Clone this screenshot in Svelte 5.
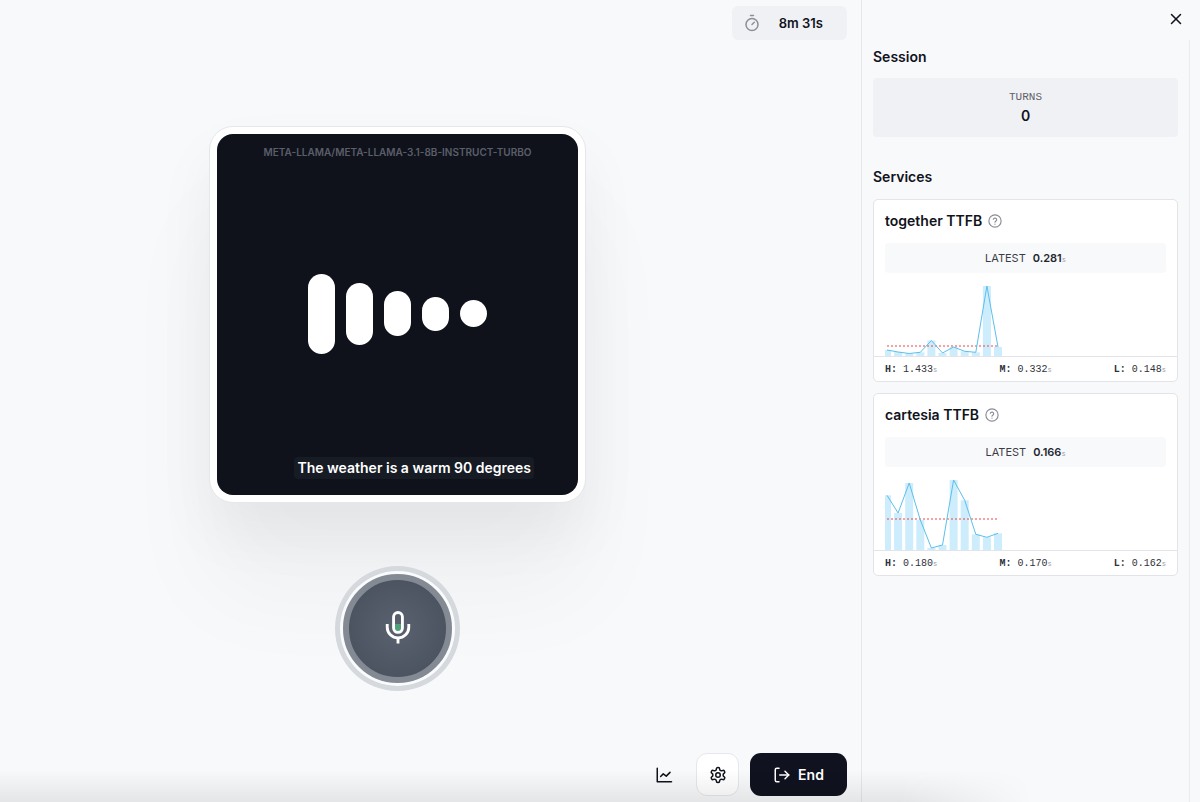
<script lang="ts">
    type Service = {
        name: string;
        latest: string;
        high: string;
        median: string;
        low: string;
        medianLine: number;
        points: number[];
    };

    const CHART_HEIGHT = 71;
    const STEP = 11.1;
    const BAR = 8;

    // points are distances from the top of the chart
    const services: Service[] = [
        {
            name: "together",
            latest: "0.281",
            high: "1.433",
            median: "0.332",
            low: "0.148",
            medianLine: 61,
            points: [65, 67, 68.5, 67.3, 55.5, 68, 62, 66.3, 67.3, 1, 62],
        },
        {
            name: "cartesia",
            latest: "0.166",
            high: "0.180",
            median: "0.170",
            low: "0.162",
            medianLine: 40,
            points: [16.3, 34, 4, 41, 69, 66, 1, 21.3, 55.3, 58.3, 54.3],
        },
    ];

    const bars = [80, 62, 45, 34, 27];

    function xAt(i: number) {
        return 2 + i * STEP;
    }

    function linePath(points: number[]) {
        return points.map((y, i) => `${xAt(i)},${y}`).join(" ");
    }
</script>

<div class="app">
    <main>
        <header>
            <div class="timer">
                <svg width="18" height="18" viewBox="0 0 24 24" fill="none" stroke="currentColor" stroke-width="2" stroke-linecap="round" stroke-linejoin="round">
                    <line x1="10" x2="14" y1="2" y2="2" />
                    <line x1="12" x2="15" y1="14" y2="11" />
                    <circle cx="12" cy="14" r="8" />
                </svg>
                <span>8m 31s</span>
            </div>
        </header>

        <section class="stage">
            <div class="frame">
                <div class="agent">
                    <span class="model">META-LLAMA/META-LLAMA-3.1-8B-INSTRUCT-TURBO</span>
                    <div class="wave">
                        {#each bars as height}
                            <i style="height: {height}px"></i>
                        {/each}
                    </div>
                    <p class="caption"><span>The weather is a warm 90 degrees</span></p>
                </div>
            </div>

            <button class="mic" aria-label="Microphone">
                <svg width="38" height="38" viewBox="0 0 24 24" fill="none" stroke="#fff" stroke-width="2" stroke-linecap="butt" stroke-linejoin="round">
                    <path d="M10 9.5h4v3a2 2 0 0 1-4 0z" fill="#4f9f78" stroke="none" />
                    <rect x="9.2" y="2.2" width="5.6" height="12.6" rx="2.8" stroke-width="1.8" />
                    <path d="M5.2 9.5v2a6.8 6.8 0 0 0 13.6 0v-2" stroke-width="1.8" />
                    <path d="M12 18.5v3.3" stroke-width="1.8" />
                </svg>
            </button>
        </section>

        <footer>
            <button class="icon-btn" aria-label="Stats">
                <svg width="18" height="18" viewBox="0 0 24 24" fill="none" stroke="currentColor" stroke-width="2" stroke-linecap="round" stroke-linejoin="round">
                    <path d="M3 3v18h19" />
                    <path d="m7.500 14 3.500-3.500 4 3 5-5" />
                </svg>
            </button>
            <button class="icon-btn outlined" aria-label="Settings">
                <svg width="18" height="18" viewBox="0 0 24 24" fill="none" stroke="currentColor" stroke-width="2" stroke-linecap="round" stroke-linejoin="round">
                    <path d="M12.22 2h-.44a2 2 0 0 0-2 2v.18a2 2 0 0 1-1 1.73l-.43.25a2 2 0 0 1-2 0l-.15-.08a2 2 0 0 0-2.73.73l-.22.38a2 2 0 0 0 .73 2.73l.15.1a2 2 0 0 1 1 1.72v.51a2 2 0 0 1-1 1.74l-.15.09a2 2 0 0 0-.73 2.73l.22.38a2 2 0 0 0 2.73.73l.15-.08a2 2 0 0 1 2 0l.43.25a2 2 0 0 1 1 1.73V20a2 2 0 0 0 2 2h.44a2 2 0 0 0 2-2v-.18a2 2 0 0 1 1-1.73l.43-.25a2 2 0 0 1 2 0l.15.08a2 2 0 0 0 2.73-.73l.22-.39a2 2 0 0 0-.73-2.73l-.15-.08a2 2 0 0 1-1-1.74v-.5a2 2 0 0 1 1-1.74l.15-.09a2 2 0 0 0 .73-2.73l-.22-.38a2 2 0 0 0-2.73-.73l-.15.08a2 2 0 0 1-2 0l-.43-.25a2 2 0 0 1-1-1.73V4a2 2 0 0 0-2-2z" />
                    <circle cx="12" cy="12" r="3" />
                </svg>
            </button>
            <button class="end">
                <svg width="18" height="18" viewBox="0 0 24 24" fill="none" stroke="currentColor" stroke-width="2" stroke-linecap="round" stroke-linejoin="round">
                    <path d="M8 21H5a2 2 0 0 1-2-2V5a2 2 0 0 1 2-2h3" />
                    <path d="M9 12h12" />
                    <path d="m16 7 5 5-5 5" />
                </svg>
                End
            </button>
        </footer>
    </main>

    <aside>
        <div class="close-row">
            <button class="close" aria-label="Close">
                <svg width="18" height="18" viewBox="0 0 24 24" fill="none" stroke="currentColor" stroke-width="2" stroke-linecap="round">
                    <path d="M18 6 6 18" />
                    <path d="m6 6 12 12" />
                </svg>
            </button>
        </div>
        <div class="panel">
            <h2>Session</h2>
            <div class="turns">
                <span class="label">TURNS</span>
                <span class="count">0</span>
            </div>

            <h2>Services</h2>
            <div class="cards">
                {#each services as service}
                    <article>
                        <div class="card-body">
                            <h3>
                                {service.name} TTFB
                                <svg width="14" height="14" viewBox="0 0 24 24" fill="none" stroke="currentColor" stroke-width="2" stroke-linecap="round" stroke-linejoin="round">
                                    <circle cx="12" cy="12" r="10.5" />
                                    <path d="M9.1 9a3 3 0 0 1 5.8 1c0 2-3 2.6-3 4" />
                                    <path d="M12 17.4h.01" />
                                </svg>
                            </h3>
                            <div class="latest">
                                <span>LATEST</span>
                                <span><strong>{service.latest}</strong><small>s</small></span>
                            </div>
                            <svg class="chart" width="100%" height={CHART_HEIGHT}>
                                {#each service.points as y, i}
                                    <rect x={xAt(i) - BAR / 2} {y} width={BAR} height={CHART_HEIGHT - y} fill="#cdedfc" />
                                {/each}
                                <line x1={xAt(0)} x2={xAt(10)} y1={service.medianLine} y2={service.medianLine} stroke="#ef4444" stroke-dasharray="2 2" />
                                <polyline points={linePath(service.points)} fill="none" stroke="#5bbfec" />
                            </svg>
                        </div>
                        <div class="summary">
                            <span><b>H:</b> {service.high}<small>s</small></span>
                            <span><b>M:</b> {service.median}<small>s</small></span>
                            <span><b>L:</b> {service.low}<small>s</small></span>
                        </div>
                    </article>
                {/each}
            </div>
        </div>
    </aside>
    <div class="fade"></div>
</div>

<style>
    :global(body) {
        background: #f8f9fb;
    }

    .app {
        position: relative;
        display: grid;
        grid-template-columns: 1fr 339px;
        min-height: 100vh;
        font-family: Inter, "Liberation Sans", sans-serif;
        color: #10131c;
        overflow: hidden;
    }

    button {
        font: inherit;
        color: inherit;
        border: 0;
        padding: 0;
        background: none;
        cursor: pointer;
    }

    svg {
        display: block;
        flex: none;
    }

    main {
        display: flex;
        flex-direction: column;
        padding: 6px 14px;
        box-sizing: border-box;
    }

    header,
    footer {
        display: flex;
        justify-content: flex-end;
    }

    .timer {
        display: flex;
        align-items: center;
        gap: 18px;
        height: 34px;
        padding: 0 24px 0 11px;
        border-radius: 6px;
        background: #f0f1f5;
        font-size: 13px;
        font-weight: 600;
    }

    .timer svg {
        color: #8d8f96;
    }

    .stage {
        flex: 1;
        display: flex;
        flex-direction: column;
        align-items: center;
        justify-content: center;
        gap: 62px;
        padding: 24px 52px 0 0;
        margin-left: -14px;
    }

    .frame {
        padding: 7px;
        border: 1px solid #e6e7eb;
        border-radius: 24px;
        background: #fff;
        box-shadow: 0 90px 100px rgba(0, 0, 0, 0.04), 0 30px 60px rgba(0, 0, 0, 0.05);
    }

    .agent {
        display: grid;
        grid-template-rows: 22px 1fr 22px;
        justify-items: center;
        align-items: center;
        width: 361px;
        height: 361px;
        box-sizing: border-box;
        padding: 7px 14px 16px;
        border-radius: 16px;
        background: #0f121b;
    }

    .model {
        font-size: 10px;
        line-height: 14px;
        font-weight: 600;
        color: #5b5e69;
    }

    .wave {
        display: flex;
        align-items: center;
        gap: 11px;
        padding-top: 8px;
    }

    .wave i {
        width: 27px;
        border-radius: 14px;
        background: #fff;
    }

    .caption {
        justify-self: end;
        margin: 0;
        padding-right: 30px;
        font-size: 14px;
        line-height: 22px;
        font-weight: 600;
        color: #fff;
    }

    .caption span {
        display: block;
        padding: 0 3px;
        border-radius: 4px;
        background: #161b24;
    }

    .mic {
        display: grid;
        place-items: center;
        width: 109px;
        height: 109px;
        margin: 9px;
        box-sizing: border-box;
        border: 6px solid #838a94;
        border-radius: 50%;
        background: radial-gradient(#5b626f, #474e5b);
        box-shadow: 0 0 0 3px #fafbfc, 0 0 0 8px #d5d8dc;
    }

    footer {
        align-items: center;
        gap: 11px;
    }

    .icon-btn {
        display: grid;
        place-items: center;
        width: 43px;
        height: 43px;
        border-radius: 11px;
    }

    .outlined {
        box-sizing: border-box;
        border: 1px solid #e6e7ec;
        background: #fff;
    }

    .end {
        display: flex;
        align-items: center;
        justify-content: center;
        gap: 7px;
        height: 43px;
        width: 97px;
        border-radius: 11px;
        background: #10131f;
        color: #fff;
        font-size: 14px;
        font-weight: 600;
    }

    aside {
        display: flex;
        flex-direction: column;
        border-left: 1px solid #e6e7ec;
    }

    .close-row {
        display: flex;
        justify-content: flex-end;
        padding: 10px 15px 12px;
    }

    .panel {
        flex: 1;
        margin-right: 10px;
        padding: 6px 11px;
        border-right: 1px solid #ebecf0;
    }

    h2,
    h3 {
        margin: 0;
        font-size: 14px;
        line-height: 22px;
        font-weight: 600;
    }

    .turns {
        display: flex;
        flex-direction: column;
        align-items: center;
        margin: 10px 0 29px;
        padding: 11px;
        border-radius: 4px;
        background: #f0f1f5;
    }

    .label {
        font-family: "Liberation Mono", monospace;
        font-size: 11px;
        line-height: 16px;
        color: #5f6168;
    }

    .count {
        font-size: 14px;
        line-height: 21px;
        font-weight: 600;
    }

    .cards {
        display: flex;
        flex-direction: column;
        gap: 11px;
        margin-top: 11px;
    }

    article {
        border: 1px solid #e3e4e9;
        border-radius: 5px;
        background: #fff;
    }

    .card-body {
        padding: 10px 11px 0;
    }

    h3 {
        display: flex;
        align-items: center;
        gap: 6px;
    }

    h3 svg {
        color: #8b8d95;
    }

    .latest {
        display: flex;
        align-items: center;
        justify-content: center;
        gap: 7px;
        height: 30px;
        margin: 11px 0 12px;
        border-radius: 4px;
        background: #f8f9fb;
        font-size: 11px;
        color: #3a3d45;
    }

    strong {
        font-weight: 600;
        color: #23262e;
    }

    small {
        font-family: "Liberation Mono", monospace;
        font-size: 7px;
        color: #9a9ca3;
    }

    .summary {
        display: flex;
        justify-content: space-between;
        padding: 2px 11px 0;
        border-top: 1px solid #e3e4e9;
        font-family: "Liberation Mono", monospace;
        font-size: 10px;
        line-height: 22px;
        color: #2f323a;
    }

    /* soft shade along the bottom edge of the window */
    .fade {
        position: absolute;
        left: 0;
        right: 0;
        bottom: 0;
        height: 32px;
        background: linear-gradient(to bottom, rgba(0, 0, 0, 0), rgba(0, 0, 0, 0.08));
        mask-image: linear-gradient(to right, #000 75%, transparent 86%);
        pointer-events: none;
    }
</style>
